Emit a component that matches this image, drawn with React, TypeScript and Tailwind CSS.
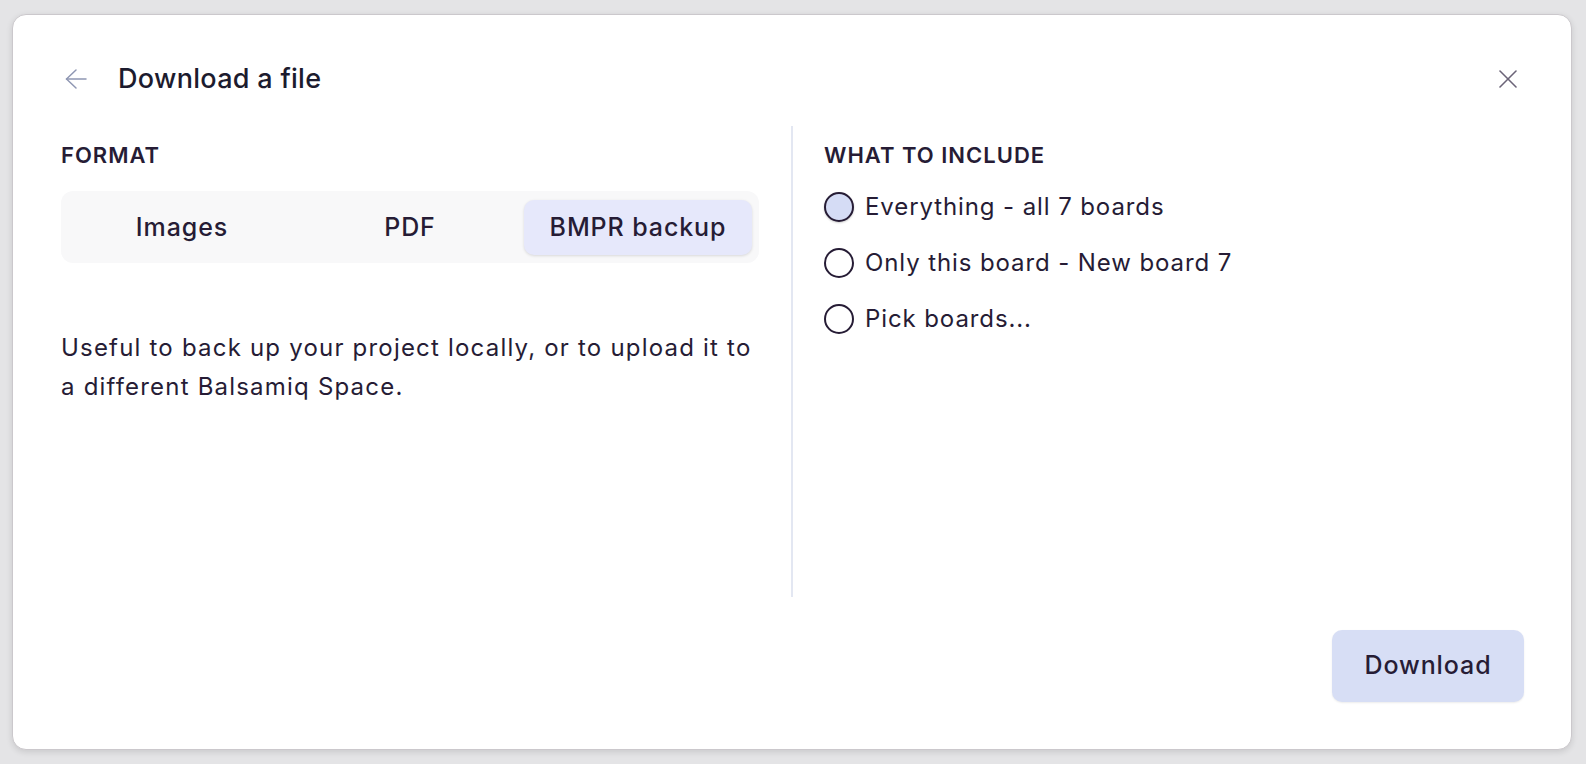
import { useState } from 'react';

const font = { fontFamily: 'Inter, "Noto Sans", sans-serif' };

const formats = ['Images', 'PDF', 'BMPR backup'];

const options = [
  'Everything - all 7 boards',
  'Only this board - New board 7',
  'Pick boards...',
];

export default function App() {
  const [format, setFormat] = useState('BMPR backup');
  const [include, setInclude] = useState(0);

  return (
    <div className="h-[764px] w-full bg-[#e4e4e6] pt-[14px] pl-[12px] pr-[14px] pb-[14px]" style={font}>
      <div className="h-full flex flex-col rounded-[14px] border border-[#cbc8cc] bg-white shadow-[0_2px_6px_rgba(0,0,0,0.12)] pl-[48px] pr-[47px] pt-[44px] pb-[47px] text-[#261c35]">
        {/* Header */}
        <div className="flex items-center h-[40px]">
          <svg className="ml-[4px] text-[#8f97b3]" width="22" height="22" viewBox="0 0 22 22" fill="none" stroke="currentColor" strokeWidth="1.5" strokeLinecap="round" strokeLinejoin="round">
            <path d="M21 11H1.5" />
            <path d="M11 2L1.5 11L11 20" />
          </svg>
          <h1 className="ml-[31px] text-[27px] font-medium text-[#1c1b2e] tracking-[0.3px]">Download a file</h1>
          <svg className="ml-auto mr-[7px] text-[#6b6478]" width="18" height="18" viewBox="0 0 18 18" fill="none" stroke="currentColor" strokeWidth="1.6" strokeLinecap="round">
            <path d="M1 1l16 16" />
            <path d="M17 1L1 17" />
          </svg>
        </div>

        {/* Body */}
        <div className="flex mt-[27px] h-[471px]">
          <div className="w-[698px] shrink-0 pt-[15px]">
            <div className="text-[22px] leading-[28px] font-semibold tracking-[1px]">FORMAT</div>
            <div className="mt-[22px] grid grid-cols-3 rounded-[12px] bg-[#f8f8f9] px-[7px] pt-[9px] pb-[8px] h-[72px]">
              {formats.map((f) => (
                <button
                  key={f}
                  onClick={() => setFormat(f)}
                  className={
                    format === f
                      ? 'rounded-[10px] bg-[#e6e8fb] shadow-[0_1px_3px_rgba(0,0,0,0.13)] text-[25px] font-medium tracking-[0.9px]'
                      : 'rounded-[10px] text-[25px] font-medium tracking-[0.9px]'
                  }
                >
                  {f}
                </button>
              ))}
            </div>
            <p className="mt-[65px] text-[24px] leading-[39px] text-[#261c35] font-normal tracking-[1.2px]">
              Useful to back up your project locally, or to upload it to a different Balsamiq Space.
            </p>
          </div>

          <div className="w-[2px] shrink-0 bg-[#e3e7f2] ml-[32px] mr-[31px]" />

          <div className="flex-1 pt-[15px]">
            <div className="text-[22px] leading-[28px] font-semibold tracking-[1px]">WHAT TO INCLUDE</div>
            <div className="mt-[23px] flex flex-col gap-[26px]">
              {options.map((o, i) => (
                <label key={o} className="flex items-center cursor-pointer" onClick={() => setInclude(i)}>
                  <span
                    className={
                      include === i
                        ? 'w-[30px] h-[30px] rounded-full border-2 border-[#261c35] bg-[#d5dcf5] shadow-[0_1px_2px_rgba(0,0,0,0.2)]'
                        : 'w-[30px] h-[30px] rounded-full border-2 border-[#261c35] bg-white'
                    }
                  />
                  <span className="ml-[11px] text-[24px] leading-[30px] tracking-[0.9px]">{o}</span>
                </label>
              ))}
            </div>
          </div>
        </div>

        {/* Footer */}
        <div className="mt-auto flex justify-end">
          <button className="w-[192px] h-[72px] rounded-[10px] bg-[#d7def5] text-[25px] font-medium tracking-[0.9px] text-[#261c35] shadow-[0_1px_2px_rgba(0,0,0,0.08)]">
            Download
          </button>
        </div>
      </div>
    </div>
  );
}
